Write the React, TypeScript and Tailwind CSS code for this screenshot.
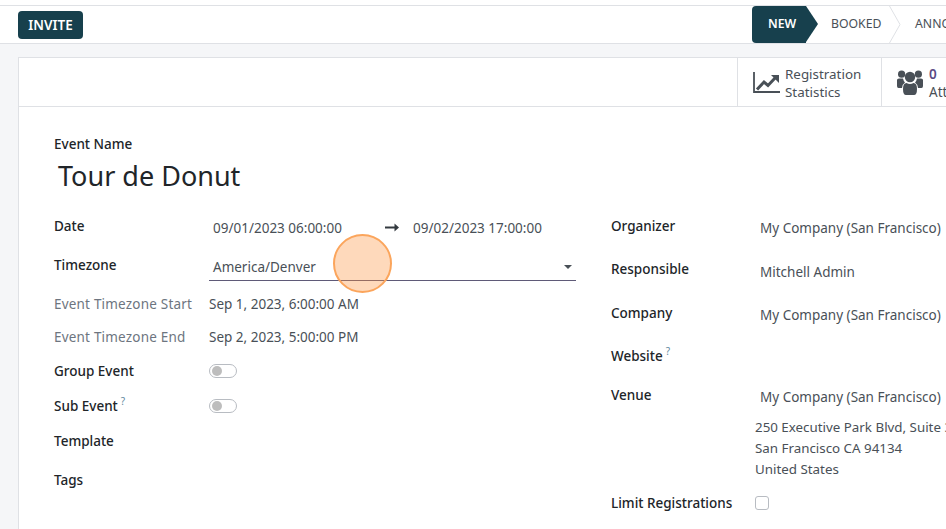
import { ReactNode } from "react"

const FONT = "[font-family:'Noto_Sans','Open_Sans',sans-serif]"

function Help() {
    return <sup className="ml-[3px] text-[10px] text-[#5f8aa0] relative -top-[6px] font-normal">?</sup>
}

function ChartIcon() {
    return (
        <svg className="shrink-0" width="27" height="21" viewBox="0 0 27 21" fill="none">
            <path d="M1 0 V20 H27" stroke="#495057" strokeWidth="1.8" />
            <path d="M4 17.5 L11 10 L15 13.5 L23 5" stroke="#495057" strokeWidth="3" />
            <path d="M18 3 H26 V11 Z" fill="#495057" />
        </svg>
    )
}

function UsersIcon() {
    return (
        <svg className="shrink-0" width="26" height="25" viewBox="0 0 26 25" fill="#495057">
            <circle cx="13" cy="7" r="5.2" />
            <circle cx="4.6" cy="4.2" r="3.6" />
            <circle cx="21.4" cy="4.2" r="3.6" />
            <path d="M0 10 Q0 8.5 2 8.5 H6 Q6.5 11 8 12.5 Q5.5 14 5 18 H1.5 Q0 18 0 16 Z" />
            <path d="M26 10 Q26 8.5 24 8.5 H20 Q19.5 11 18 12.5 Q20.5 14 21 18 H24.5 Q26 18 26 16 Z" />
            <path d="M6 19 Q6 13 9.5 13 Q13 15 16.5 13 Q20 13 20 19 Q20 25 17 25 H9 Q6 25 6 19 Z" />
        </svg>
    )
}

function Row({ label, muted, help, h, children }: {
    label: string
    muted?: boolean
    help?: boolean
    h: string
    children?: ReactNode
}) {
    return (
        <div className={`flex ${h}`}>
            <div className={`w-[155px] shrink-0 h-5 leading-5 ${muted ? "text-[#6d7580] tracking-[0.2px]" : "font-medium text-[#212529]"}`}>
                {label}{help && <Help />}
            </div>
            {children}
        </div>
    )
}

function Toggle() {
    return (
        <div className="w-7 h-[14px] mt-[3px] rounded-full border border-[#b8bcc2] bg-white flex items-center pl-[2px]">
            <div className="w-[10px] h-[10px] rounded-full bg-[#bdbdbd]" />
        </div>
    )
}

export default function App() {
    return (
        <div className={`relative w-[946px] h-[529px] overflow-hidden bg-[#f5f6f8] text-[13.5px] text-[#495057] ${FONT}`}>
            <div className="h-[5px] bg-white" />
            <div className="h-[39px] bg-white border-y border-[#dfe1e5] flex justify-between pl-[18px]">
                <button className="mt-[5px] w-[65px] h-7 rounded bg-[#17404d] text-white text-[13.5px] font-semibold">INVITE</button>
                <div className="flex w-[194px] shrink-0 text-[12.25px] overflow-hidden">
                    <div className="relative w-[54px] h-full bg-[#17404d] rounded-l text-white font-semibold flex items-center pl-[16px] shrink-0">
                        NEW
                        <div className="absolute left-[54px] top-0 h-0 w-0 border-y-[18.5px] border-y-transparent border-l-[12px] border-l-[#17404d]" />
                    </div>
                    <div className="relative w-[83px] shrink-0 flex items-center pl-[25px] text-[#495057]">
                        BOOKED
                        <svg className="absolute left-[83px] top-0" width="12" height="37" viewBox="0 0 12 37">
                            <path d="M0.5 0 L11 18.5 L0.5 37" fill="none" stroke="#dfe1e5" />
                        </svg>
                    </div>
                    <div className="shrink-0 flex items-center pl-[26px] text-[#495057]">ANNOUNCED</div>
                </div>
            </div>

            <div className="ml-[18px] mt-[13px] w-[1000px] h-[500px] bg-white border border-[#dfe1e5]">
                <div className="h-[49px] border-b border-[#dfe1e5] flex pl-[718px]">
                    <div className="w-[144px] shrink-0 border-l border-[#dfe1e5] flex items-center pl-[15px] gap-[5px]">
                        <ChartIcon />
                        <div className="leading-[18px] text-[13.4px] text-[#495057] pt-[1px]">Registration<br />Statistics</div>
                    </div>
                    <div className="w-[120px] shrink-0 border-l border-[#dfe1e5] flex items-center pl-[15px] gap-[6px]">
                        <UsersIcon />
                        <div className="leading-[18px] text-[#495057] pt-[1px]">
                            <span className="block font-semibold text-[#5b4a85]">0</span>
                            Attendees
                        </div>
                    </div>
                </div>

                <div className="pl-[35px] pt-[27px]">
                    <div className="h-5 leading-5 font-medium text-[#212529]">Event Name</div>
                    <div className="h-[44px] pl-1 text-[27px] leading-[44px] text-[#212529]">Tour de Donut</div>
                    <div className="flex mt-[18px]">
                        <div className="w-[557px] shrink-0">
                            <Row label="Date" h="h-[39px]">
                                <div className="flex pl-[4px] pt-[2px] h-5 leading-5">
                                    <span className="w-[172px]">09/01/2023 06:00:00</span>
                                    <span className="w-[28px] pt-[5px]">
                                        <svg width="14" height="9" viewBox="0 0 14 9" fill="#343a40">
                                            <rect x="0" y="3.5" width="10" height="2" />
                                            <path d="M9.5 0.5 L14 4.5 L9.5 8.5 Z" />
                                        </svg>
                                    </span>
                                    <span>09/02/2023 17:00:00</span>
                                </div>
                            </Row>
                            <Row label="Timezone" h="h-[39px]">
                                <div className="w-[367px] h-[26px] border-b border-[#5f5a78] flex justify-between items-start pl-[4px] pt-[2px] leading-5 pr-[4px]">
                                    America/Denver
                                    <div className="mt-2 w-0 h-0 border-x-[4px] border-x-transparent border-t-[4px] border-t-[#495057]" />
                                </div>
                            </Row>
                            <Row label="Event Timezone Start" muted h="h-[33px]"><span className="leading-5">Sep 1, 2023, 6:00:00 AM</span></Row>
                            <Row label="Event Timezone End" muted h="h-[34px]"><span className="leading-5">Sep 2, 2023, 5:00:00 PM</span></Row>
                            <Row label="Group Event" h="h-[35px]"><Toggle /></Row>
                            <Row label="Sub Event" help h="h-[35px]"><Toggle /></Row>
                            <Row label="Template" h="h-[39px]" />
                            <Row label="Tags" h="h-[39px]" />
                        </div>
                        <div className="shrink-0 [&>div>div:first-child]:w-[144px]">
                            <Row label="Organizer" h="h-[43px]"><span className="pl-[5px] pt-[2px] leading-5">My Company (San Francisco)</span></Row>
                            <Row label="Responsible" h="h-[44px]"><span className="pl-[5px] pt-[3px] leading-5">Mitchell Admin</span></Row>
                            <Row label="Company" h="h-[43px]"><span className="pl-[5px] pt-[2px] leading-5">My Company (San Francisco)</span></Row>
                            <Row label="Website" help h="h-[39px]" />
                            <Row label="Venue" h="h-[108px]">
                                <div>
                                    <div className="pl-[5px] pt-[2px] leading-5">My Company (San Francisco)</div>
                                    <div className="mt-[10px] leading-[21px] text-[13.35px]">
                                        250 Executive Park Blvd, Suite 3400<br />San Francisco CA 94134<br />United States
                                    </div>
                                </div>
                            </Row>
                            <Row label="Limit Registrations" h="h-[30px]">
                                <div className="mt-[3px] w-[14px] h-[14px] rounded-[3px] border border-[#b8bcc2] bg-white" />
                            </Row>
                        </div>
                    </div>
                </div>
            </div>

            <div className="absolute left-[333px] top-[234px] w-[59px] h-[59px] rounded-full bg-[#fb923c]/35 border-[2px] border-[#fba55c]" />
        </div>
    )
}
